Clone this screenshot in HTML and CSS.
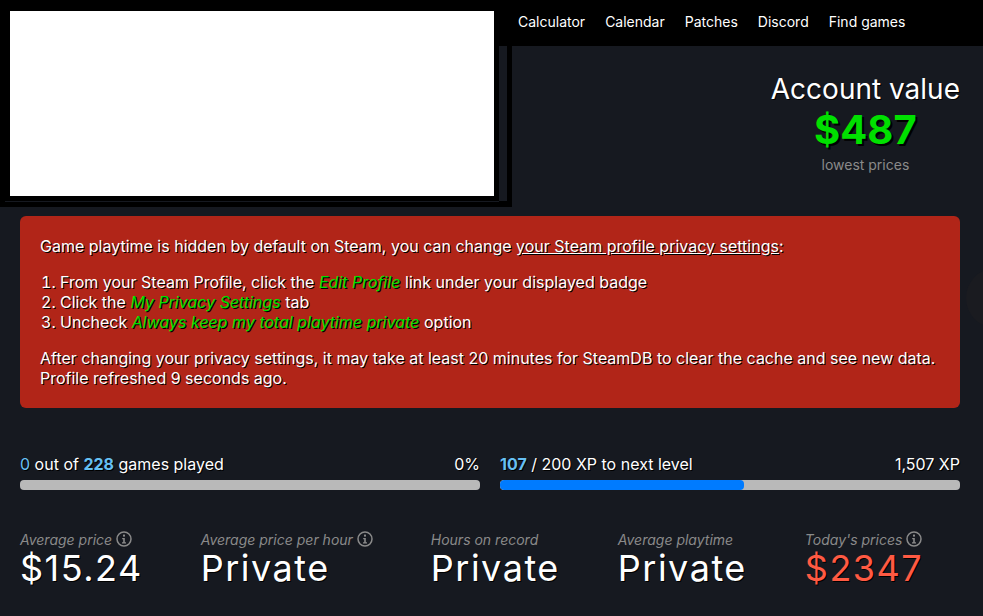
FILE: index.html
```html
<!DOCTYPE html>
<html lang="en">
<head>
<meta charset="utf-8">
<title>Account value</title>
<link rel="stylesheet" href="styles.css">
</head>
<body>
<svg class="sprite" width="0" height="0" aria-hidden="true">
  <symbol id="info" viewBox="0 0 16 16">
    <circle cx="8" cy="8" r="7" fill="none" stroke="currentColor" stroke-width="1.5"/>
    <rect x="7" y="3.6" width="2" height="2" fill="currentColor"/>
    <path d="M6.2 7h2.6v4.2h1.2v1.2H6v-1.2h1.2V8.2h-1z" fill="currentColor"/>
  </symbol>
</svg>
<div class="top">
  <div class="panel">
    <div class="panel-main">
      <div class="blank"></div>
      <div class="rule"></div>
    </div>
    <div class="strip"></div>
  </div>
  <div class="side">
    <nav class="nav">
      <a href="#">Calculator</a>
      <a href="#">Calendar</a>
      <a href="#">Patches</a>
      <a href="#">Discord</a>
      <a href="#">Find games</a>
    </nav>
    <div class="value-wrap">
      <div class="value">
        <div class="value-title">Account value</div>
        <div class="value-amount">$487</div>
        <div class="value-note">lowest prices</div>
      </div>
    </div>
  </div>
</div>
<div class="glow"></div>
<main class="main">
  <section class="alert">
    <p>Game playtime is hidden by default on Steam, you can change <a href="#">your Steam profile privacy settings</a>:</p>
    <ol>
      <li>From your Steam Profile, click the <em>Edit Profile</em> link under your displayed badge</li>
      <li>Click the <em>My Privacy Settings</em> tab</li>
      <li>Uncheck <em>Always keep my total playtime private</em> option</li>
    </ol>
    <p>After changing your privacy settings, it may take at least 20 minutes for SteamDB to clear the cache and see new data.<br>Profile refreshed 9 seconds ago.</p>
  </section>
  <section class="progress-row">
    <div class="progress">
      <div class="progress-text"><span><span class="num">0</span> out of <b class="num">228</b> games played</span><span>0%</span></div>
      <div class="bar"></div>
    </div>
    <div class="progress">
      <div class="progress-text"><span><b class="num">107</b> / 200 XP to next level</span><span>1,507 XP</span></div>
      <div class="bar"><div class="bar-fill" style="width:53%"></div></div>
    </div>
  </section>
  <section class="stats">
    <div class="stat">
      <div class="stat-label">Average price <svg class="info"><use href="#info"/></svg></div>
      <div class="stat-value">$15.24</div>
    </div>
    <div class="stat">
      <div class="stat-label">Average price per hour <svg class="info"><use href="#info"/></svg></div>
      <div class="stat-value">Private</div>
    </div>
    <div class="stat">
      <div class="stat-label">Hours on record</div>
      <div class="stat-value">Private</div>
    </div>
    <div class="stat">
      <div class="stat-label">Average playtime</div>
      <div class="stat-value">Private</div>
    </div>
    <div class="stat">
      <div class="stat-label">Today's prices <svg class="info"><use href="#info"/></svg></div>
      <div class="stat-value stat-red">$2347</div>
    </div>
  </section>
</main>
</body>
</html>
```
FILE: styles.css
```css
* { box-sizing: border-box; }
html, body { margin: 0; padding: 0; }
body {
  background: #161920;
  color: #fff;
  font-family: Inter, "Liberation Sans", sans-serif;
  font-size: 16px;
  line-height: 20px;
  height: 616px;
  overflow: hidden;
  position: relative;
}
.sprite { position: absolute; }
.top { display: flex; height: 207px; }
.panel {
  width: 512px;
  flex: none;
  background: #000;
  display: flex;
  padding-left: 5px;
}
.panel-main { width: 494px; flex: none; }
.blank { height: 185px; margin: 11px 5px 0; background: #fff; }
.rule { height: 1px; margin-top: 5px; background: #161920; }
.strip { width: 8px; height: 155px; margin-top: 46px; background: #161920; }
.side { flex: 1; min-width: 0; }
.nav {
  height: 46px;
  background: #000;
  display: flex;
  align-items: center;
  gap: 20px;
  padding: 0 0 2px 6px;
  font-size: 14px;
}
.nav a { color: #fff; text-decoration: none; }
.value-wrap { display: flex; justify-content: flex-end; padding: 26px 23px 0 0; }
.value { text-align: center; }
.value-title { font-size: 28px; line-height: 34px; text-shadow: 1px 1px 0 #000; }
.value-amount {
  font-size: 40px;
  line-height: 48px;
  font-weight: 700;
  color: #00e000;
  text-shadow: 2px 2px 0 #000;
}
.value-note { font-size: 14px; line-height: 20px; color: #8a8a8a; margin-top: 1px; }
.glow {
  position: absolute;
  left: 966px;
  top: 268px;
  width: 60px;
  height: 60px;
  border-radius: 50%;
  background: #1a1b20;
}
.main { position: relative; padding: 9px 23px 0 20px; }
.alert {
  height: 192px;
  padding: 20px;
  background: #b12518;
  border-radius: 6px;
  text-shadow: 1px 1px 0 #000;
}
.alert p { margin: 0; }
.alert a { color: #fff; }
.alert ol { margin: 16px 0; padding-left: 20px; }
.alert em { color: #00e000; }
.progress-row { display: flex; gap: 20px; margin-top: 46px; }
.progress { flex: 1; min-width: 0; }
.progress-text {
  display: flex;
  justify-content: space-between;
  height: 20px;
  margin-bottom: 6px;
  text-shadow: 1px 1px 0 #000;
}
.num { color: #66c0f4; }
.progress-text b { font-weight: 700; }
.bar { height: 10px; border-radius: 4px; background: #b9b9b9; overflow: hidden; }
.bar-fill { height: 100%; background: #007bff; border-radius: 4px; }
.stats { display: flex; gap: 58px; margin-top: 40px; }
.stat-label {
  font-size: 14px;
  line-height: 20px;
  font-style: italic;
  color: #8a8a8a;
  white-space: nowrap;
}
.info { width: 16px; height: 16px; vertical-align: -2px; }
.stat-value {
  font-size: 36px;
  line-height: 36px;
  letter-spacing: 1.5px;
  white-space: nowrap;
  text-shadow: 1px 1px 0 #000;
}
.stat-red { color: #ff5a43; }
```
